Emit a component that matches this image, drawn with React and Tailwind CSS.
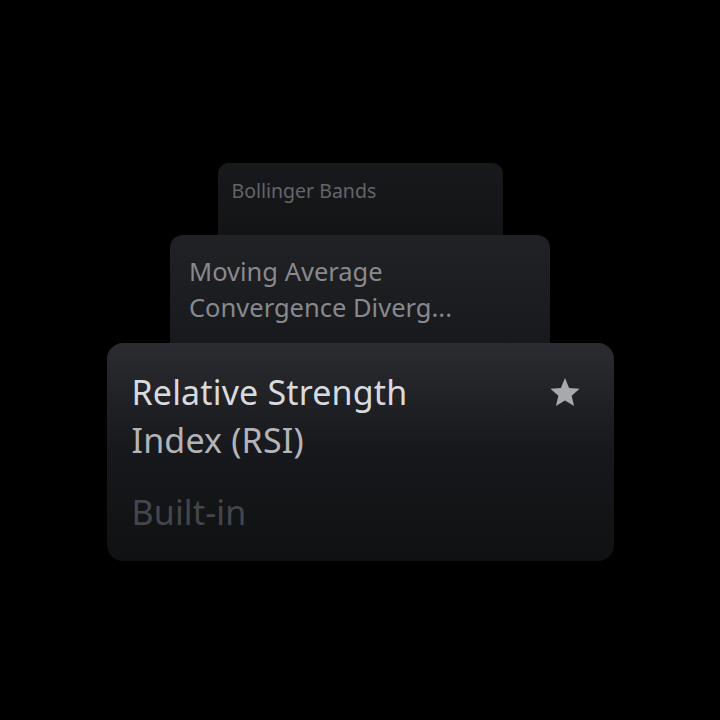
import React from "react";

function Star() {
  return (
    <svg viewBox="0 0 24 24" className="w-[34px] h-[34px]" fill="#a7a9ae">
      <path d="M12 2.2l2.9 6.9 7.4.6-5.6 4.9 1.7 7.3L12 18l-6.4 3.9 1.7-7.3L1.7 9.7l7.4-.6z" />
    </svg>
  );
}

export default function App() {
  return (
    <div
      className="w-[720px] h-[720px] bg-black flex flex-col items-center justify-center pt-[3px]"
      style={{ fontFamily: '"Noto Sans", "Open Sans", sans-serif' }}
    >
      <div className="w-[285px] h-[72px] rounded-t-[11px] bg-gradient-to-b from-[#18191c] to-[#131416] px-[14px] pt-[14px]">
        <div className="text-[19.5px] leading-[28px] text-[#636569]">Bollinger Bands</div>
      </div>
      <div className="w-[380px] h-[108px] rounded-t-[13px] bg-gradient-to-b from-[#202226] to-[#18191c] px-[19px] pt-[18px]">
        <div className="text-[25.5px] leading-[36px] text-[#88898d]">
          <div>Moving Average</div>
          <div>Convergence Diverg...</div>
        </div>
      </div>
      <div className="w-[507px] h-[218px] rounded-[16px] bg-gradient-to-b from-[#2a2c31] via-[#17181b] to-[#101113] pl-[25px] pr-[32px] pt-[25px] flex justify-between">
        <div className="tracking-[0.01em]">
          <div className="text-[34px] leading-[48px] text-[#d9dade]">Relative Strength</div>
          <div className="text-[34px] leading-[48px] text-[#b3b4b8]">Index (RSI)</div>
          <div className="text-[34px] leading-[48px] mt-[24px] text-[#44464b]">Built-in</div>
        </div>
        <div className="pt-[7px]">
          <Star />
        </div>
      </div>
    </div>
  );
}
